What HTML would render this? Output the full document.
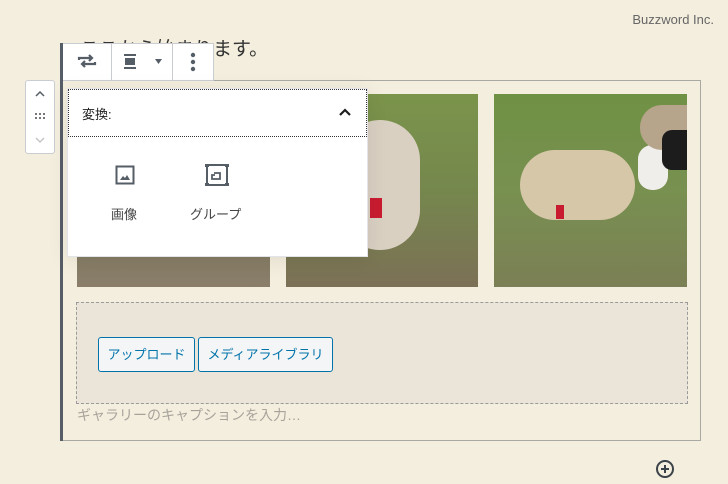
<!DOCTYPE html>
<html><head><meta charset="utf-8"><style>
*{margin:0;padding:0;box-sizing:border-box}
body{width:728px;height:484px;overflow:hidden;background:#f4eede;font-family:"Liberation Sans","Noto Sans CJK JP",sans-serif;position:relative}
.abs{position:absolute}
</style></head><body>
<div class="abs" style="right:14px;top:12px;font-size:13px;color:#666">Buzzword Inc.</div>
<div class="abs" style="left:80px;top:34px;font-size:19px;color:#333">ここから始まります。</div>
<!-- block frame -->
<div class="abs" style="left:60px;top:80px;width:641px;height:361px;border:1px solid #a8a9a5;border-left:none"></div>
<div class="abs" style="left:60px;top:43px;width:3px;height:398px;background:#555d66"></div>
<!-- images -->
<div class="abs" style="left:77px;top:94px;width:193px;height:193px;background:linear-gradient(180deg,#6d7a4c 0%,#7f7a5e 60%,#8a7e6a 100%)"></div>
<div class="abs" style="left:286px;top:94px;width:192px;height:193px;background:linear-gradient(180deg,#7b944b 0%,#75874d 50%,#7c7056 100%)"></div>
<div class="abs" style="left:340px;top:120px;width:80px;height:130px;border-radius:40px;background:#d9d0c2"></div>
<div class="abs" style="left:370px;top:198px;width:12px;height:20px;background:#c91b30"></div>
<div class="abs" style="left:494px;top:94px;width:193px;height:193px;background:linear-gradient(180deg,#6f9144 0%,#789050 50%,#7b7f55 100%)"></div>
<div class="abs" style="left:520px;top:150px;width:115px;height:70px;border-radius:35px;background:#d6c7a9"></div>
<div class="abs" style="left:638px;top:145px;width:30px;height:45px;border-radius:14px;background:#f0eeea"></div>
<div class="abs" style="left:640px;top:105px;width:47px;height:45px;border-radius:22px 0 0 22px;background:#b7a58b"></div>
<div class="abs" style="left:662px;top:130px;width:25px;height:40px;background:#1c1c1c;border-radius:10px 0 0 10px"></div>
<div class="abs" style="left:556px;top:205px;width:8px;height:14px;background:#c91b30"></div>
<!-- upload -->
<div class="abs" style="left:76px;top:302px;width:612px;height:102px;background:#ebe4d9;border:1px dashed #9a9a9a"></div>
<div class="abs" style="left:98px;top:337px;width:97px;height:35px;border:1px solid #0073aa;border-radius:3px;background:#f3f5f6;color:#0073aa;font-size:13px;line-height:33px;text-align:center">アップロード</div>
<div class="abs" style="left:198px;top:337px;width:135px;height:35px;border:1px solid #0073aa;border-radius:3px;background:#f3f5f6;color:#0073aa;font-size:13px;line-height:33px;text-align:center">メディアライブラリ</div>
<div class="abs" style="left:77px;top:405px;font-size:14px;color:#a7a39b">ギャラリーのキャプションを入力…</div>
<svg class="abs" style="left:655px;top:459px" width="20" height="20" viewBox="0 0 20 20"><circle cx="10" cy="10" r="8" fill="none" stroke="#3b4248" stroke-width="2"/><path d="M10 6v8M6 10h8" stroke="#3b4248" stroke-width="2"/></svg>
<!-- mover -->
<div class="abs" style="left:25px;top:80px;width:30px;height:74px;background:#fff;border:1px solid #c9ccd0;border-radius:3px"></div>
<svg class="abs" style="left:32px;top:86px" width="16" height="64" viewBox="0 0 16 64"><path d="M4 10l4-4 4 4" fill="none" stroke="#555d66" stroke-width="1.5"/><g fill="#777"><rect x="3" y="27" width="2" height="2"/><rect x="7" y="27" width="2" height="2"/><rect x="11" y="27" width="2" height="2"/><rect x="3" y="31" width="2" height="2"/><rect x="7" y="31" width="2" height="2"/><rect x="11" y="31" width="2" height="2"/></g><path d="M4 52l4 4 4-4" fill="none" stroke="#c3c6c9" stroke-width="1.5"/></svg>
<!-- toolbar -->
<div class="abs" style="left:63px;top:43px;width:151px;height:38px;background:#fff;border:1px solid #c9ccd0;border-left:none"></div>
<div class="abs" style="left:111px;top:44px;width:1px;height:36px;background:#c9ccd0"></div>
<div class="abs" style="left:172px;top:44px;width:1px;height:36px;background:#c9ccd0"></div>
<svg class="abs" style="left:76px;top:50px" width="22" height="22" viewBox="0 0 22 22"><path d="M3 10V8h13M13 5l3 3-3 3M19 12v2H6M9 17l-3-3 3-3" fill="none" stroke="#555d66" stroke-width="2.2"/></svg>
<svg class="abs" style="left:122px;top:54px" width="16" height="16" viewBox="0 0 16 16"><rect x="2" y="0" width="12" height="2" fill="#555d66"/><rect x="3" y="4" width="10" height="7" fill="#555d66"/><rect x="2" y="13" width="12" height="2" fill="#555d66"/></svg>
<svg class="abs" style="left:155px;top:59px" width="8" height="6"><path d="M0 0h7l-3.5 5z" fill="#555d66"/></svg>
<svg class="abs" style="left:189px;top:52px" width="8" height="20"><circle cx="4" cy="3" r="2.2" fill="#555d66"/><circle cx="4" cy="10" r="2.2" fill="#555d66"/><circle cx="4" cy="17" r="2.2" fill="#555d66"/></svg>
<!-- popover -->
<div class="abs" style="left:67px;top:88px;width:301px;height:169px;background:#fff;border:1px solid #e2e4e7;box-shadow:0 3px 20px rgba(0,0,0,.08)"></div>
<div class="abs" style="left:68px;top:89px;width:299px;height:48px;border:1px dotted #333"></div>
<div class="abs" style="left:82px;top:104px;font-size:13px;color:#1e1e1e">変換:</div>
<svg class="abs" style="left:338px;top:107px" width="14" height="10"><path d="M2 8l5-5 5 5" fill="none" stroke="#1e1e1e" stroke-width="2.2"/></svg>
<svg class="abs" style="left:115px;top:165px" width="20" height="20" viewBox="0 0 20 20"><rect x="1.5" y="1.5" width="17" height="17" fill="none" stroke="#555d66" stroke-width="2"/><path d="M5 15l3-4 2 2 2-3 3 5z" fill="#555d66"/></svg>
<div class="abs" style="left:111px;top:204px;font-size:13px;color:#444">画像</div>
<svg class="abs" style="left:205px;top:164px" width="24" height="22" viewBox="0 0 24 22"><rect x="2" y="1" width="20" height="20" fill="none" stroke="#555d66" stroke-width="2"/><rect x="0" y="0" width="4" height="3" fill="#555d66"/><rect x="20" y="0" width="4" height="3" fill="#555d66"/><rect x="0" y="19" width="4" height="3" fill="#555d66"/><rect x="20" y="19" width="4" height="3" fill="#555d66"/><path d="M9 9h6v6H7V11h3" fill="none" stroke="#555d66" stroke-width="1.8"/></svg>
<div class="abs" style="left:190px;top:204px;font-size:13px;color:#444">グループ</div>
</body></html>
